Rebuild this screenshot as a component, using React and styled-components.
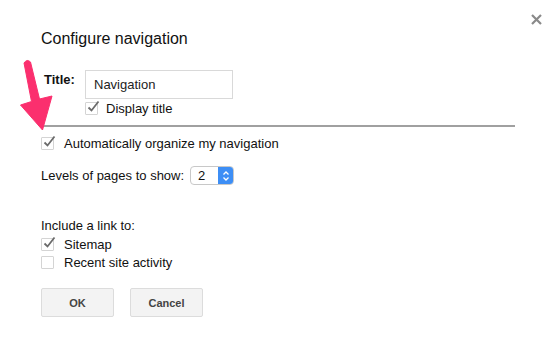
import React from "react";
import styled, { createGlobalStyle } from "styled-components";

const Global = createGlobalStyle`
  html, body { margin: 0; padding: 0; background: #fff; }
  body { font-family: "Liberation Sans", Arial, sans-serif; color: #222; }
`;

export default function App() {
    return (
        <>
            <Global />
            <Dialog>
                <Close aria-label="Close">
                    <svg width="11" height="11" viewBox="0 0 11 11">
                        <path d="M1 1 L10 10 M10 1 L1 10" stroke="#8a8a8a" strokeWidth="2.2" />
                    </svg>
                </Close>
                <Heading>Configure navigation</Heading>

                <TitleRow>
                    <Label>Title:</Label>
                    <TitleFields>
                        <TextInput defaultValue="Navigation" />
                        <Check checked label="Display title" gap={8} />
                    </TitleFields>
                </TitleRow>

                <Divider />

                <Check checked label="Automatically organize my navigation" />

                <LevelsRow>
                    Levels of pages to show:
                    <Select>
                        <SelectValue>2</SelectValue>
                        <SelectArrows>
                            <svg width="8" height="12" viewBox="0 0 8 12">
                                <path d="M1.5 4.5 L4 2 L6.5 4.5 M1.5 7.5 L4 10 L6.5 7.5" stroke="#fff" strokeWidth="1.3" fill="none" />
                            </svg>
                        </SelectArrows>
                    </Select>
                </LevelsRow>

                <Section>
                    <SectionTitle>Include a link to:</SectionTitle>
                    <Check checked label="Sitemap" />
                    <Check label="Recent site activity" />
                </Section>

                <Buttons>
                    <Button>OK</Button>
                    <Button>Cancel</Button>
                </Buttons>

                {/* pink callout arrow, drawn in page coordinates */}
                <Arrow width="60" height="135" viewBox="0 0 60 135">
                    <path
                        d="M24 63 Q27 58.5 30.5 62 L39.5 99 L52 96 L42.5 130 L20.5 105 L31.5 101.5 Z"
                        fill="#fb2f6e"
                        stroke="#fb2f6e"
                        strokeWidth="1"
                        strokeLinejoin="round"
                    />
                </Arrow>
            </Dialog>
        </>
    );
}

function Check({ checked, label, gap }) {
    return (
        <CheckRow $gap={gap}>
            <Box>
                {checked && (
                    <svg width="15" height="15" viewBox="0 0 15 15">
                        <path d="M2.5 7.5 L5.5 10.5 L12.5 1.5" stroke="#6b6b6b" strokeWidth="1.8" fill="none" />
                    </svg>
                )}
            </Box>
            <span>{label}</span>
        </CheckRow>
    );
}

const Dialog = styled.div`
    position: relative;
    width: 555px;
    height: 343px;
    box-sizing: border-box;
    padding: 0 40px 0 41px;
    display: flex;
    flex-direction: column;
    font-size: 13px;
    overflow: hidden;
`;

const Close = styled.div`
    position: absolute;
    top: 14px;
    right: 13px;
    width: 11px;
    height: 11px;
    line-height: 0;
`;

const Heading = styled.h1`
    margin: 29px 0 0;
    font-size: 16px;
    font-weight: normal;
    color: #111;
    line-height: 20px;
`;

const TitleRow = styled.div`
    display: flex;
    margin-top: 21px;
    padding-left: 3px;
`;

const Label = styled.div`
    font-weight: bold;
    width: 41px;
    padding-top: 2px;
    color: #111;
`;

const TitleFields = styled.div`
    display: flex;
    flex-direction: column;
`;

const TextInput = styled.input`
    width: 148px;
    height: 29px;
    box-sizing: border-box;
    border: 1px solid #d9d9d9;
    padding: 0 8px;
    font-family: "Liberation Sans", Arial, sans-serif;
    font-size: 13px;
    color: #222;
    outline: none;
`;

const CheckRow = styled.div`
    display: flex;
    align-items: center;
    gap: ${p => p.$gap || 10}px;
    height: 18px;
    color: #111;
`;

const Box = styled.div`
    position: relative;
    width: 11px;
    height: 11px;
    border: 1px solid #d4d4d4;
    border-radius: 1px;
    background: #fff;
    & svg { position: absolute; left: 0; top: -3px; }
`;

const Divider = styled.div`
    height: 0;
    border-top: 2px solid #a0a0a0;
    margin: 8px 0 7px;
    width: 474px;
`;

const LevelsRow = styled.div`
    display: flex;
    align-items: center;
    gap: 6px;
    margin-top: 14px;
    color: #111;
`;

const Select = styled.div`
    display: flex;
    width: 44px;
    height: 19px;
    border: 1px solid #c8c8c8;
    border-radius: 4px;
    box-sizing: border-box;
    overflow: hidden;
`;

const SelectValue = styled.div`
    flex: 1;
    padding-left: 7px;
    line-height: 17px;
`;

const SelectArrows = styled.div`
    width: 15px;
    background: #3d8ef5;
    display: flex;
    align-items: center;
    justify-content: center;
`;

const Section = styled.div`
    display: flex;
    flex-direction: column;
    margin-top: 32px;
`;

const SectionTitle = styled.div`
    color: #111;
    line-height: 18px;
`;

const Buttons = styled.div`
    display: flex;
    gap: 16px;
    margin-top: 17px;
`;

const Button = styled.button`
    width: 73px;
    height: 29px;
    border: 1px solid #dcdcdc;
    border-radius: 2px;
    background: #f3f3f3;
    font-family: "Liberation Sans", Arial, sans-serif;
    font-size: 11px;
    font-weight: bold;
    color: #444;
    padding: 0;
`;

const Arrow = styled.svg`
    position: absolute;
    left: 0;
    top: 0;
`;
